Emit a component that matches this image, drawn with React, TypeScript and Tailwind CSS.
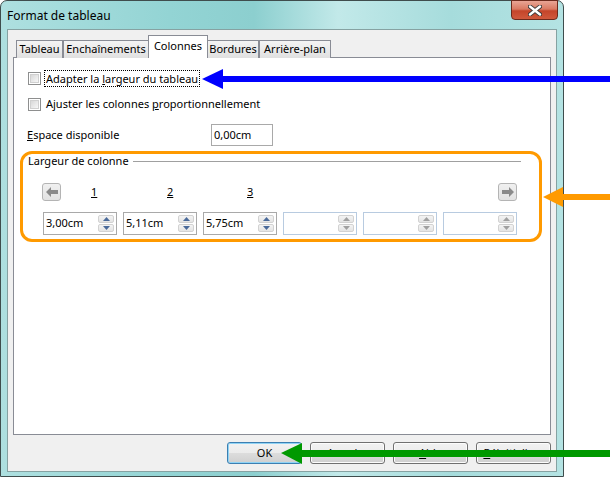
import React from 'react';

const tabs = [
  { label: 'Tableau', w: 'w-[47px]' },
  { label: 'Enchaînements', w: 'w-[86px]' },
  { label: 'Colonnes', w: 'w-[60px]', active: true },
  { label: 'Bordures', w: 'w-[52px]' },
  { label: 'Arrière-plan', w: 'w-[72px]' },
];

const Checkbox = () => (
  <span className="h-[13px] w-[13px] shrink-0 border border-[#8e8f8f] bg-white p-px">
    <span className="block h-full w-full border border-[#d0d0d0] bg-[linear-gradient(135deg,#d8d8d8,#f7f7f7)]" />
  </span>
);

const Spinner = ({ enabled }: { enabled: boolean }) => {
  const c = enabled ? '#4a6a9a' : '#a0a0a0';
  return (
    <div className="ml-auto mr-[2px] flex h-[17px] w-[16px] flex-col gap-px">
      <div className="flex h-[8px] items-center justify-center rounded-[2px] border border-[#d2d2d2] bg-[linear-gradient(#f4f4f4,#e4e4e4)]">
        <svg width="7" height="4" viewBox="0 0 7 4"><polygon points="3.5,0 7,4 0,4" fill={c} /></svg>
      </div>
      <div className="flex h-[8px] items-center justify-center rounded-[2px] border border-[#d2d2d2] bg-[linear-gradient(#f4f4f4,#e4e4e4)]">
        <svg width="7" height="4" viewBox="0 0 7 4"><polygon points="0,0 7,0 3.5,4" fill={c} /></svg>
      </div>
    </div>
  );
};

const SpinField = ({ value }: { value?: string }) => (
  <div className={`flex h-[23px] w-[74px] items-center border bg-white pl-[2px] ${value ? 'border-[#a9a9a9]' : 'border-[#b8cbe0]'}`}>
    <span>{value}</span>
    <Spinner enabled={!!value} />
  </div>
);

const NavButton = ({ dir }: { dir: 'left' | 'right' }) => (
  <div className="flex h-[18px] w-[19px] items-center justify-center rounded-[3px] border border-[#b4b4b4] bg-[linear-gradient(#f0f0f0,#e2e2e2)]">
    <svg width="12" height="10" viewBox="0 0 12 10">
      {dir === 'left' ? (
        <polygon points="0,5 5,0 5,3 12,3 12,7 5,7 5,10" fill="#8a8a8a" />
      ) : (
        <polygon points="12,5 7,0 7,3 0,3 0,7 7,7 7,10" fill="#8a8a8a" />
      )}
    </svg>
  </div>
);

const DialogButton = ({ children, primary }: { children: React.ReactNode; primary?: boolean }) => (
  <button
    className={`flex h-[22px] w-[75px] items-center justify-center rounded-[3px] border bg-[linear-gradient(#f2f2f2,#ebebeb_50%,#dddddd_50%,#cfcfcf)] text-black ${
      primary ? 'border-[#3c7fb1] shadow-[inset_0_0_0_1px_#8fd3f5]' : 'border-[#707070] shadow-[inset_0_0_0_1px_#fcfcfc]'
    }`}
  >
    {children}
  </button>
);

export default function App() {
  return (
    <div className="relative h-[479px] w-[610px] overflow-hidden bg-white font-['Noto_Sans',sans-serif] text-[11px] text-black">
      {/* window */}
      <div className="relative flex h-[477px] w-[564px] flex-col rounded-t-[7px] border border-[#3f4d4d] bg-[linear-gradient(90deg,#aee0e0,#93d4d4_30%,#8ccfcf_45%,#c2e9e9_60%,#a6dcdc_80%,#b4e3e3)]">
        <div className="flex h-[28px] shrink-0 items-center pl-[6px] pt-px text-[12px]">Format de tableau</div>
        <div className="absolute right-[5px] top-[-1px] flex h-[20px] w-[47px] items-center justify-center rounded-b-[4px] border border-[#6b2a1c] bg-[linear-gradient(#e8a595,#d97a62_45%,#c4452a_55%,#d0593c)]">
          <svg width="14" height="11" viewBox="0 0 14 11">
            <path d="M2 1.5 L12 9.5 M12 1.5 L2 9.5" stroke="#3a3a3a" strokeWidth="4.2" strokeLinecap="round" />
            <path d="M2 1.5 L12 9.5 M12 1.5 L2 9.5" stroke="#ffffff" strokeWidth="2.4" strokeLinecap="round" />
          </svg>
        </div>

        {/* client area */}
        <div className="mx-[6px] flex h-[443px] flex-col border border-[#86a2a2] bg-[#f0f0f0] px-[5px] pt-[5px]">
          <div className="relative z-10 -mb-px ml-[3px] flex h-[23px] items-end">
            {tabs.map((t) =>
              t.active ? (
                <div key={t.label} className={`${t.w} -mx-px flex h-[23px] items-start justify-center border border-b-0 border-[#898c95] bg-white pt-[2px]`}>
                  {t.label}
                </div>
              ) : (
                <div key={t.label} className={`${t.w} flex h-[18px] items-center justify-center border border-b-0 border-[#898c95] bg-[linear-gradient(#f4f4f4,#e0e0e0)]`}>
                  {t.label}
                </div>
              )
            )}
          </div>

          {/* panel */}
          <div className="flex h-[378px] flex-col border border-[#898c95] bg-white px-[6px]">
            <div className="ml-[8px] mt-[12px] flex h-[17px] items-center">
              <Checkbox />
              <span className="ml-[3px] border border-dotted border-black px-px leading-[15px]">
                Adapter la <span className="underline">l</span>argeur du tableau
              </span>
            </div>
            <div className="ml-[8px] mt-[9px] flex h-[17px] items-center">
              <Checkbox />
              <span className="ml-[4px] px-px">
                Ajuster les colonnes <span className="underline">p</span>roportionnellement
              </span>
            </div>
            <div className="ml-[7px] mt-[11px] flex h-[22px] items-center">
              <span className="w-[184px]">
                <span className="underline">E</span>space disponible
              </span>
              <div className="flex h-[22px] w-[62px] items-center border border-[#a9a9a9] pl-[2px]">0,00cm</div>
            </div>

            {/* column width group */}
            <div className="mt-[5px] flex h-[91px] w-[522px] flex-col rounded-[12px] border-[3px] border-[#ff9a00]">
              <div className="flex h-[15px] items-center pl-[5px]">
                <span>Largeur de colonne</span>
                <span className="ml-[4px] mr-[18px] h-px flex-1 bg-[#a0a0a0]" />
              </div>
              <div className="ml-[19px] mt-[14px] flex h-[18px] gap-[6px]">
                <div className="flex w-[75px] items-center">
                  <NavButton dir="left" />
                  <span className="ml-[30px] underline">1</span>
                </div>
                <div className="flex w-[74px] items-center pl-[44px]">
                  <span className="underline">2</span>
                </div>
                <div className="flex w-[74px] items-center pl-[44px]">
                  <span className="underline">3</span>
                </div>
                <div className="w-[74px]" />
                <div className="w-[74px]" />
                <div className="flex w-[74px] items-center justify-end">
                  <NavButton dir="right" />
                </div>
              </div>
              <div className="ml-[20px] mt-[11px] flex gap-[6px]">
                <SpinField value="3,00cm" />
                <SpinField value="5,11cm" />
                <SpinField value="5,75cm" />
                <SpinField />
                <SpinField />
                <SpinField />
              </div>
            </div>
          </div>

          <div className="mt-[7px] flex justify-end gap-[8px]">
            <DialogButton primary>OK</DialogButton>
            <DialogButton>Annuler</DialogButton>
            <DialogButton>
              <span className="underline">A</span>ide
            </DialogButton>
            <DialogButton>
              <span className="underline">R</span>éinitialiser
            </DialogButton>
          </div>
        </div>
      </div>

      {/* annotation arrows */}
      <svg className="pointer-events-none absolute left-0 top-0" width="610" height="479" viewBox="0 0 610 479">
        <rect x="220" y="76" width="390" height="6" fill="#0000ff" />
        <polygon points="202,79 223,69 223,89" fill="#0000ff" />
        <rect x="560" y="194" width="50" height="6" fill="#ff9a00" />
        <polygon points="543,197 563,187 563,207" fill="#ff9a00" />
        <rect x="299" y="450" width="311" height="7" fill="#009900" />
        <polygon points="281,453 302,443 302,464" fill="#009900" />
      </svg>
    </div>
  );
}
